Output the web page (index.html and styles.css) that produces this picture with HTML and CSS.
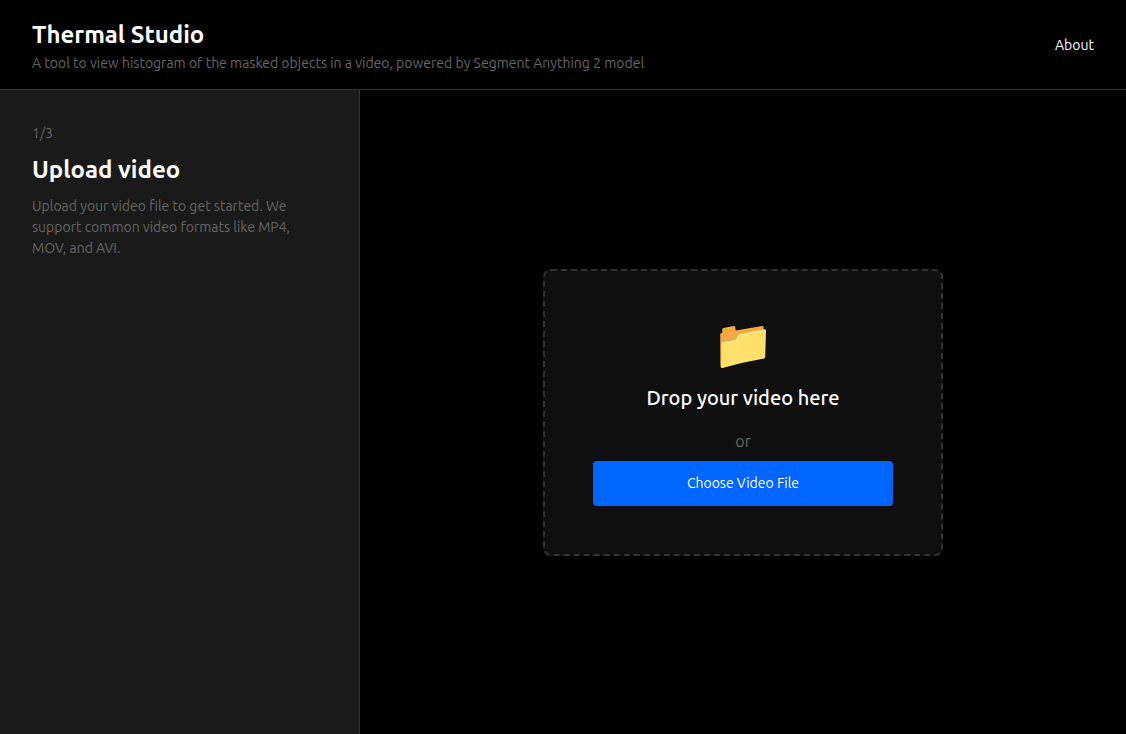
FILE: index.html
```html
<!DOCTYPE html>
<html lang="en">
<head>
<meta charset="utf-8">
<meta name="viewport" content="width=device-width, initial-scale=1">
<title>Thermal Studio</title>
<link rel="stylesheet" href="styles.css">
</head>
<body>
<header class="header">
  <div>
    <h1 class="title">Thermal Studio</h1>
    <p class="text">A tool to view histogram of the masked objects in a video, powered by Segment Anything 2 model</p>
  </div>
  <a class="nav-link" href="#about">About</a>
</header>
<div class="workspace">
  <aside class="sidebar">
    <p class="text">1/3</p>
    <h2 class="title">Upload video</h2>
    <p class="text">Upload your video file to get started. We support common video formats like MP4, MOV, and AVI.</p>
  </aside>
  <main class="main">
    <section class="dropzone">
      <svg class="folder" viewBox="0 0 48 48" aria-hidden="true">
        <path fill="#f2a845" d="M1.200 15.200Q1.200 14.400 2 14.200L3.200 13.800V10.500Q3.200 9.200 4.500 8.900L14.500 7.100Q16 6.900 16.200 8.200L16.700 11.500L43 7Q44.700 6.800 44.700 8.300V11L20 24 2.200 49Q1.400 48 1.400 46Z"/>
        <path fill="#ffe06c" d="M3.800 23.500 15.500 21.500Q18 21.100 18.300 18.300Q18.600 15.800 20.500 15.400L45.300 10.600Q47 10.300 47 12L46.200 38Q46.200 39.200 45 39.400Q24 43 3.500 49Q2 49.300 2 47.800L2.500 25Q2.500 23.800 3.800 23.500Z"/>
        <path fill="none" stroke="#fff3a8" stroke-width=".9" d="M3.300 23.800 15.500 21.800Q18.200 21.300 18.600 18.300Q18.900 16.100 20.800 15.700L46.400 10.900"/>
      </svg>
      <h3 class="prompt">Drop your video here</h3>
      <p class="divider">or</p>
      <button class="choose" type="button">Choose Video File</button>
    </section>
  </main>
</div>
</body>
</html>
```
FILE: styles.css
```css
* {
  box-sizing: border-box;
  margin: 0;
}

body {
  display: flex;
  flex-direction: column;
  min-height: 100vh;
  background: #000;
  color: #fff;
  font: 400 14px/21px Ubuntu, "Open Sans", "Noto Sans", sans-serif;
}

.header {
  display: flex;
  align-items: center;
  justify-content: space-between;
  gap: 32px;
  padding: 17px 32px 15px;
  border-bottom: 1px solid #333;
}

.title {
  font-size: 24px;
  font-weight: 600;
  line-height: 36px;
}

.text {
  color: #666;
}

.nav-link {
  color: #fff;
  text-decoration: none;
}

.workspace {
  display: flex;
  flex: 1;
}

.sidebar {
  display: flex;
  flex-direction: column;
  flex: 0 0 360px;
  gap: 8px;
  padding: 33px 32px 32px;
  background: #1a1a1a;
  border-right: 1px solid #333;
}

.main {
  display: flex;
  flex: 1;
  align-items: center;
  justify-content: center;
  padding: 32px;
}

.dropzone {
  display: flex;
  flex-direction: column;
  align-items: center;
  width: 100%;
  max-width: 400px;
  padding: 48px;
  background: #0f0f0f;
  border: 2px dashed #333;
  border-radius: 8px;
}

.folder {
  width: 48px;
  height: 48px;
  margin-bottom: 16px;
  overflow: visible;
}

.prompt {
  margin-bottom: 16px;
  font-size: 20px;
  font-weight: 500;
  line-height: 30px;
}

.divider {
  margin-bottom: 8px;
  color: #666;
  font-size: 16px;
  line-height: 24px;
}

.choose {
  width: 100%;
  padding: 12px 24px;
  background: #06f;
  border: 0;
  border-radius: 4px;
  color: #fff;
  font: inherit;
}
```
